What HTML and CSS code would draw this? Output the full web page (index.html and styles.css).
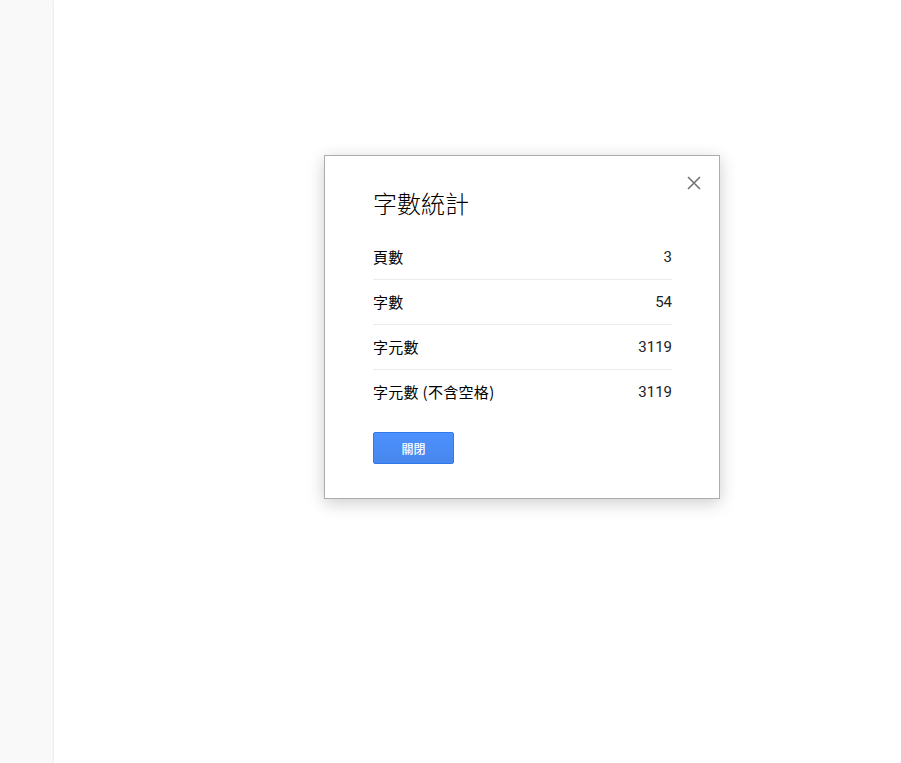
FILE: index.html
```html
<!DOCTYPE html>
<html lang="zh-Hant">
<head>
<meta charset="utf-8">
<title>字數統計</title>
<link rel="stylesheet" href="styles.css">
</head>
<body>
<div class="app">
  <aside class="sidebar"></aside>
  <main class="canvas"></main>
</div>
<div class="dialog" role="dialog">
  <button class="close" aria-label="關閉">
    <svg width="14" height="14" viewBox="0 0 14 14"><path d="M1 1L13 13M13 1L1 13" stroke="#737373" stroke-width="1.6" fill="none"/></svg>
  </button>
  <h2 class="title">字數統計</h2>
  <div class="stats">
    <div class="row"><span class="label">頁數</span><span class="num">3</span></div>
    <div class="row"><span class="label">字數</span><span class="num">54</span></div>
    <div class="row"><span class="label">字元數</span><span class="num">3119</span></div>
    <div class="row"><span class="label">字元數 (不含空格)</span><span class="num">3119</span></div>
  </div>
  <button class="btn">關閉</button>
</div>
</body>
</html>
```
FILE: styles.css
```css
html, body { margin: 0; padding: 0; height: 100%; }
body {
  font-family: Arial, "Liberation Sans", "Noto Sans CJK TC", sans-serif;
  background: #fff;
  overflow: hidden;
}
.app { display: flex; height: 100vh; }
.sidebar {
  width: 54px;
  background: #f9f9f9;
  box-shadow: inset -2px 0 2px -1px rgba(0,0,0,0.05);
}
.canvas { flex: 1; background: #fff; }

.dialog {
  position: absolute;
  left: 324px;
  top: 155px;
  width: 299px;
  padding: 31px 47px 34px 48px;
  background: #fff;
  border: 1px solid #acacac;
  box-shadow: 0 4px 16px rgba(0,0,0,0.2);
  color: #222;
}
.close {
  position: absolute;
  top: 17px;
  right: 15px;
  width: 20px;
  height: 20px;
  padding: 0;
  border: 0;
  background: transparent;
  display: flex;
  align-items: center;
  justify-content: center;
}
.title {
  margin: 0 0 16px;
  font-size: 24px;
  line-height: 32px;
  color: #000;
  font-family: "Noto Sans CJK TC", sans-serif;
  font-weight: 300;
}
.stats { display: flex; flex-direction: column; }
.row {
  display: flex;
  justify-content: space-between;
  align-items: center;
  height: 44px;
  border-bottom: 1px solid #ebebeb;
  font-size: 15px;
  line-height: 20px;
  padding-bottom: 1px;
  box-sizing: border-box;
  height: 45px;
  color: #000;
}
.row:last-child { border-bottom: 0; height: 44px; }
.label { font-family: "Noto Sans CJK TC", sans-serif; font-weight: 400; letter-spacing: 0.3px; }
.num { font-family: Roboto, Arial, sans-serif; color: #222; }
.btn {
  margin-top: 18px;
  width: 81px;
  height: 32px;
  border: 1px solid #3079ed;
  border-radius: 2px;
  background: linear-gradient(#4d90fe, #4787ed);
  color: #fff;
  font-size: 12px;
  font-family: "Noto Sans CJK TC", sans-serif;
  font-weight: 500;
  padding: 0;
}
```
